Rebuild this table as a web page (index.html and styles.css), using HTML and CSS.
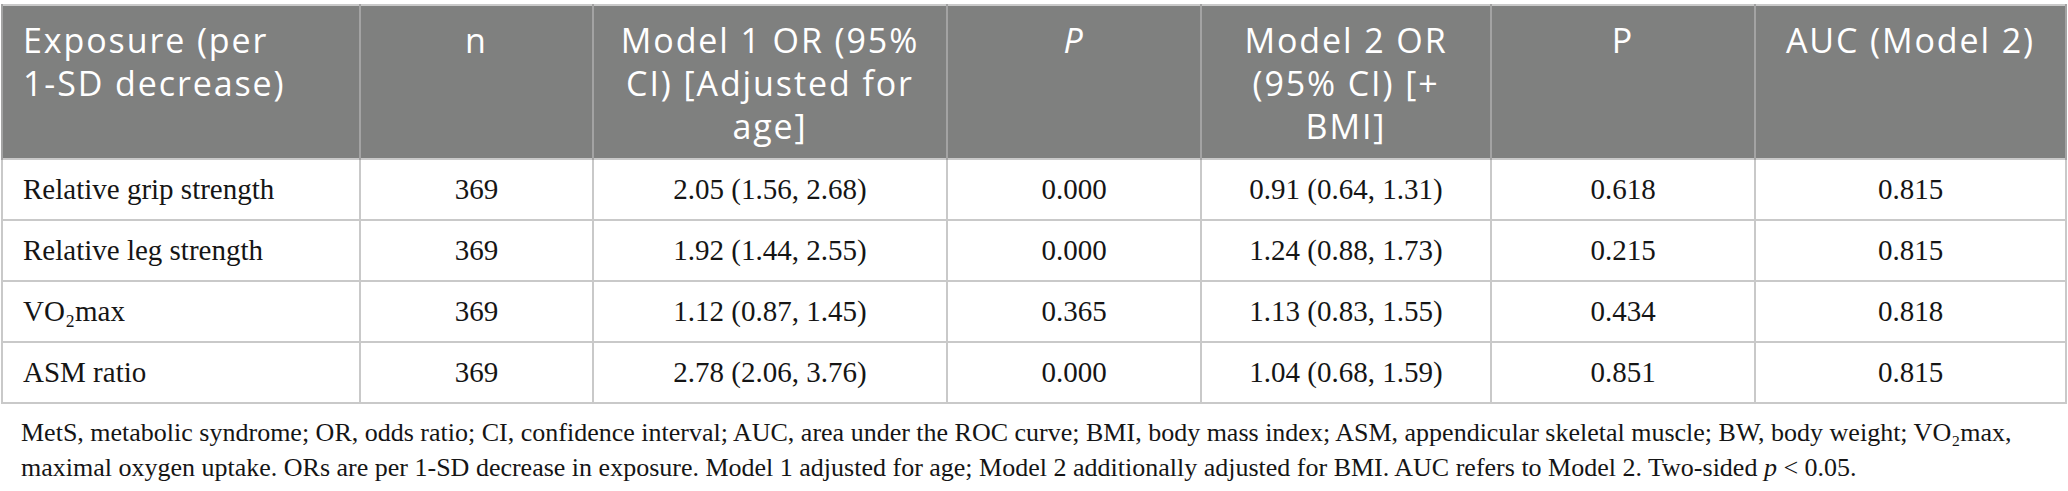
FILE: index.html
```html
<!DOCTYPE html>
<html lang="en">
<head>
<meta charset="utf-8">
<title>Table</title>
<link rel="stylesheet" href="styles.css">
</head>
<body>
<div class="page">
  <table class="data">
    <colgroup>
      <col class="c1"><col class="c2"><col class="c3"><col class="c4"><col class="c5"><col class="c6"><col class="c7">
    </colgroup>
    <thead>
      <tr>
        <th class="left">Exposure (per <span class="nowrap">1-SD</span> decrease)</th>
        <th>n</th>
        <th>Model 1 OR (95% CI) [Adjusted for age]</th>
        <th><i>P</i></th>
        <th>Model 2 OR (95% CI) [+ BMI]</th>
        <th>P</th>
        <th>AUC (Model 2)</th>
      </tr>
    </thead>
    <tbody>
      <tr><td class="left">Relative grip strength</td><td>369</td><td>2.05 (1.56, 2.68)</td><td>0.000</td><td>0.91 (0.64, 1.31)</td><td>0.618</td><td>0.815</td></tr>
      <tr><td class="left">Relative leg strength</td><td>369</td><td>1.92 (1.44, 2.55)</td><td>0.000</td><td>1.24 (0.88, 1.73)</td><td>0.215</td><td>0.815</td></tr>
      <tr><td class="left">VO₂max</td><td>369</td><td>1.12 (0.87, 1.45)</td><td>0.365</td><td>1.13 (0.83, 1.55)</td><td>0.434</td><td>0.818</td></tr>
      <tr><td class="left">ASM ratio</td><td>369</td><td>2.78 (2.06, 3.76)</td><td>0.000</td><td>1.04 (0.68, 1.59)</td><td>0.851</td><td>0.815</td></tr>
    </tbody>
  </table>
  <p class="note">MetS, metabolic syndrome; OR, odds ratio; CI, confidence interval; AUC, area under the ROC curve; BMI, body mass index; ASM, appendicular skeletal muscle; BW, body weight; VO₂max, maximal oxygen uptake. ORs are per 1-SD decrease in exposure. Model 1 adjusted for age; Model 2 additionally adjusted for BMI. AUC refers to Model 2. Two-sided <i>p</i> &lt; 0.05.</p>
</div>
</body>
</html>
```
FILE: styles.css
```css
html, body {
  margin: 0;
  padding: 0;
  background: #ffffff;
}
.page {
  padding: 4px 3px 0 1px;
}
.data {
  width: 2064px;
  border-collapse: collapse;
  table-layout: fixed;
  border: 2px solid #c9c9c9;
}
.c1 { width: 358px; }
.c2 { width: 233px; }
.c3 { width: 354px; }
.c4 { width: 254px; }
.c5 { width: 290px; }
.c6 { width: 264px; }
.c7 { width: 311px; }
.data th {
  background: #7f807f;
  color: #ffffff;
  font-family: "Open Sans", sans-serif;
  font-weight: 400;
  font-size: 34px;
  letter-spacing: 1.9px;
  line-height: 43px;
  text-align: center;
  vertical-align: top;
  padding: 13px 20px 10px 20px;
  height: 127px;
  border-left: 2px solid #a3a3a3;
  border-right: 2px solid #a3a3a3;
}
.nowrap {
  white-space: nowrap;
}
.data td {
  font-family: "Liberation Serif", "Times New Roman", serif;
  font-size: 29px;
  color: #151515;
  text-align: center;
  height: 59px;
  padding: 0 20px;
  border: 2px solid #c9c9c9;
}
.data .left {
  text-align: left;
}
.note {
  margin: 11px 0 0 20px;
  font-family: "Liberation Serif", "Times New Roman", serif;
  font-size: 26px;
  line-height: 35px;
  color: #151515;
}
```
